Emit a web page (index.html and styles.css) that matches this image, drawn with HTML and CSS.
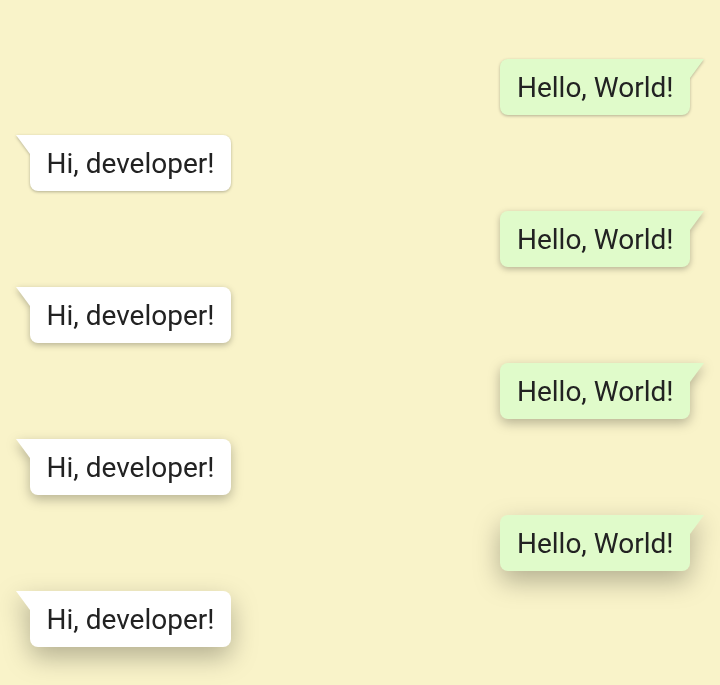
FILE: index.html
```html
<!DOCTYPE html>
<html>
<head>
<meta charset="utf-8">
<link rel="stylesheet" href="styles.css">
</head>
<body>
<div class="chat">
  <div class="row sent"><div class="bubble out e1">Hello, World!</div></div>
  <div class="row recv"><div class="bubble in e1">Hi, developer!</div></div>
  <div class="row sent"><div class="bubble out e2">Hello, World!</div></div>
  <div class="row recv"><div class="bubble in e2">Hi, developer!</div></div>
  <div class="row sent"><div class="bubble out e3">Hello, World!</div></div>
  <div class="row recv"><div class="bubble in e3">Hi, developer!</div></div>
  <div class="row sent"><div class="bubble out e4">Hello, World!</div></div>
  <div class="row recv"><div class="bubble in e4">Hi, developer!</div></div>
</div>
</body>
</html>
```
FILE: styles.css
```css
html, body {
  margin: 0;
  padding: 0;
  height: 100%;
  background: #f9f3c9;
}
body {
  font-family: Roboto, "Liberation Sans", sans-serif;
  overflow: hidden;
}
.chat {
  display: flex;
  flex-direction: column;
  gap: 20px;
  padding: 59px 30px 0 30px;
}
.row {
  display: flex;
}
.row.sent {
  justify-content: flex-end;
}
.row.recv {
  justify-content: flex-start;
}
.bubble {
  position: relative;
  height: 56px;
  box-sizing: border-box;
  padding: 0 16.5px;
  display: flex;
  align-items: center;
  font-size: 28px;
  color: #222222;
  border-radius: 8px;
}
.bubble.out {
  background: #e0fbca;
  border-top-right-radius: 0;
}
.bubble.in {
  background: #ffffff;
  border-top-left-radius: 0;
}
.bubble::after {
  content: "";
  position: absolute;
  top: 0;
  width: 14px;
  height: 19px;
}
.bubble.out::after {
  left: 100%;
  background: #e0fbca;
  clip-path: polygon(0 0, 100% 0, 0 100%);
}
.bubble.in::after {
  right: 100%;
  background: #ffffff;
  clip-path: polygon(0 0, 100% 0, 100% 100%);
}
.e1 { filter: drop-shadow(0 1px 1.5px rgba(0,0,0,0.28)); }
.e2 { filter: drop-shadow(0 2px 3px rgba(0,0,0,0.27)); }
.e3 { filter: drop-shadow(0 4px 6px rgba(0,0,0,0.27)); }
.e4 { filter: drop-shadow(0 10px 13px rgba(0,0,0,0.28)); }
```
